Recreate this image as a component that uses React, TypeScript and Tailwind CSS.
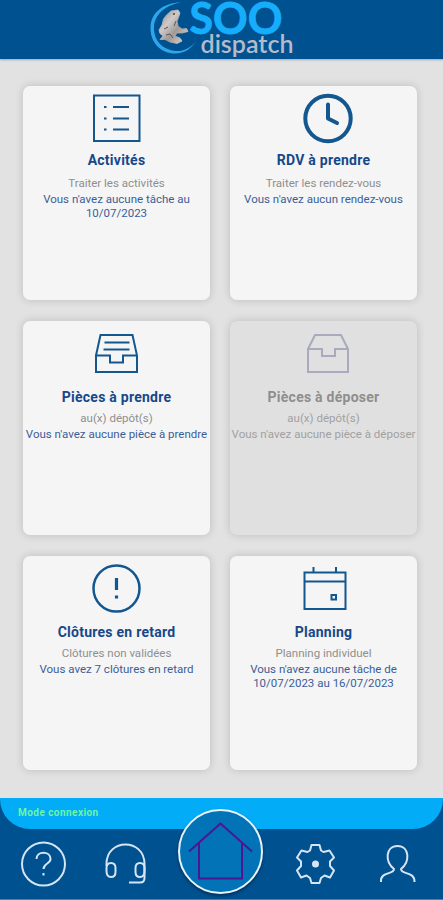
import type { ReactNode } from "react";

const font = "font-[Roboto,sans-serif]";

function Logo() {
    return (
        <svg width="150" height="62" viewBox="0 0 150 62" className="absolute top-0 left-[147px] overflow-visible">
            <defs>
                <linearGradient id="frog" x1="0" y1="0" x2="1" y2="1">
                    <stop offset="0" stopColor="#8d8785" />
                    <stop offset="0.35" stopColor="#cfcac8" />
                    <stop offset="0.6" stopColor="#a09996" />
                    <stop offset="1" stopColor="#e6e0dc" />
                </linearGradient>
            </defs>
            {/* crescent */}
            <path d="M34 2.500C16 2.500 3.500 13 3.500 28C3.500 44 15 53.500 28 53.500C38 53.500 44 48.500 49 41.500C42 49 36 51.500 29 51C16 50 7 41 7 28C7 15 18 5 34 2.500Z" fill="#2ea6ec" />
            {/* frog */}
            <path
                d="M19.500 15L24 11L31 10L33 13L31.500 17.500L30 21L31 26L35 29L39.500 28.500L41 31.500L35 33L30 33L28 36L33 38L35 41L30 43.500L23 42L18 39.500L13 39.500L16 36L13 33.500L12 30L15 25L16.500 19Z"
                fill="url(#frog)"
                stroke="url(#frog)"
                strokeWidth="0.800"
                strokeLinejoin="round"
            />
            <path d="M17 29L21 27M19 35L23 34L26 38M29 21L27 26" stroke="#5a5557" strokeWidth="1" fill="none" />
            <circle cx="27" cy="14" r="0.900" fill="#39383c" />
            <text x="42.500" y="33.500" textLength="93" lengthAdjust="spacingAndGlyphs" fontSize="43" fontWeight="700" fontFamily="Lato, sans-serif" fill="#16aefc" stroke="#16aefc" strokeWidth="0.800">SOO</text>
            <text x="53.500" y="53" textLength="93" lengthAdjust="spacingAndGlyphs" fontSize="25" fontWeight="600" fontFamily="Lato, sans-serif" fill="#b4bccb">dispatch</text>
        </svg>
    );
}

const iconProps = {
    width: 52,
    height: 52,
    viewBox: "0 0 52 52",
    fill: "none",
    stroke: "currentColor",
    strokeWidth: 2,
    className: "overflow-visible",
};

const cards: {
    title: string;
    subtitle: string;
    lines: string[];
    icon: ReactNode;
    tight?: boolean;
    disabled?: boolean;
}[] = [
    {
        title: "Activités",
        subtitle: "Traiter les activités",
        lines: ["Vous n'avez aucune tâche au", "10/07/2023"],
        tight: true,
        icon: (
            <svg {...iconProps}>
                <rect x="3" y="3.500" width="45.500" height="45.500" />
                <path d="M13 15H15.500M22 15H38M13 26.500H15.500M22 26.500H38M13 37.500H15.500M22 37.500H38" />
            </svg>
        ),
    },
    {
        title: "RDV à prendre",
        subtitle: "Traiter les rendez-vous",
        lines: ["Vous n'avez aucun rendez-vous"],
        tight: true,
        icon: (
            <svg {...iconProps} viewBox="-4 0 52 52" strokeWidth="4" strokeLinecap="round" strokeLinejoin="round">
                <circle cx="26" cy="26.500" r="22.700" />
                <path d="M26 12.500V26.500L35 31" />
            </svg>
        ),
    },
    {
        title: "Pièces à prendre",
        subtitle: "au(x) dépôt(s)",
        lines: ["Vous n'avez aucune pièce à prendre"],
        icon: (
            <svg {...iconProps}>
                <path d="M5 27.500L9.500 7H41.500L46 27.500V44H5V27.500H19V34.500H32V27.500H46M13.500 14.500H38.500M12.500 21.500H38.500" />
            </svg>
        ),
    },
    {
        title: "Pièces à déposer",
        subtitle: "au(x) dépôt(s)",
        lines: ["Vous n'avez aucune pièce à déposer"],
        disabled: true,
        icon: (
            <svg {...iconProps} viewBox="-4 0 52 52">
                <path d="M6 21L13 7H39L46 21V44H6V21H20V28H33V21H46" />
            </svg>
        ),
    },
    {
        title: "Clôtures en retard",
        subtitle: "Clôtures non validées",
        lines: ["Vous avez 7 clôtures en retard"],
        icon: (
            <svg {...iconProps} strokeWidth="2.500">
                <circle cx="25.500" cy="25.500" r="23" />
                <path d="M25.500 15V27M25.500 32.500V35.500" strokeWidth="3.200" />
            </svg>
        ),
    },
    {
        title: "Planning",
        subtitle: "Planning individuel",
        lines: ["Vous n'avez aucune tâche de", "10/07/2023 au 16/07/2023"],
        icon: (
            <svg {...iconProps} viewBox="-2 0 52 52">
                <path d="M4.500 9.500H45.500V46H4.500ZM4.500 18.500H45.500M13.500 4V9.500M36 4V9.500" />
                <rect x="31.500" y="32" width="4.500" height="4.500" />
            </svg>
        ),
    },
];

export default function App() {
    return (
        <main className={`flex h-[900px] w-[443px] flex-col overflow-hidden bg-[#e2e2e2] ${font}`}>
            {/* Header */}
            <header className="relative h-[59px] shrink-0 bg-[#00518f] shadow-[0_1px_2px_rgba(0,60,110,0.35)]">
                <Logo />
            </header>

            {/* Cards */}
            <section className="grid grow grid-cols-[187px_187px] content-start gap-x-5 gap-y-[21px] pt-[27px] pl-[23px]">
                {cards.map((card) => (
                    <div
                        key={card.title}
                        className={`flex h-[214px] flex-col items-center rounded-[7px] text-center whitespace-nowrap shadow-[0_0_8px_rgba(0,0,0,0.17)] ${
                            card.disabled ? "bg-[#e0e0e0] text-[#a9aabb]" : "bg-[#f5f5f5] text-[#125790]"
                        } ${card.tight ? "pt-[6px]" : "pt-[7px]"}`}
                    >
                        {card.icon}
                        <h2
                            className={`text-[14px] leading-[18px] font-bold tracking-[0.25px] ${card.tight ? "mt-[7px]" : "mt-[8px]"} ${
                                card.disabled ? "text-[#8e8e8e]" : "text-[#16488a]"
                            }`}
                        >
                            {card.title}
                        </h2>
                        <p
                            className={`text-[11.500px] leading-[14px] ${card.tight ? "mt-[7px]" : "mt-[5px]"} ${
                                card.disabled ? "text-[#a0a0a0]" : "text-[#8f8f8f]"
                            }`}
                        >
                            {card.subtitle}
                        </p>
                        <div
                            className={`mt-[2px] text-[11.500px] leading-[14px] ${
                                card.disabled ? "text-[#a0a0a0]" : "text-[#3b5e98]"
                            }`}
                        >
                            {card.lines.map((line) => (
                                <p key={line}>{line}</p>
                            ))}
                        </div>
                    </div>
                ))}
            </section>

            {/* Bottom bar */}
            <footer className="relative h-[102px] shrink-0 bg-[#00518f]">
                <div className="h-[31px] rounded-b-[30px] bg-[#02acf7] pt-[8px] pl-[18px]">
                    <p className="text-[10px] leading-[14px] font-bold tracking-[0.45px] text-[#6df5a5]">Mode connexion</p>
                </div>
                <nav className="flex h-[70px] text-[#d5e5f5]">
                    <svg width="88" height="70" viewBox="0 0 88 70" fill="none" stroke="currentColor" strokeWidth="2">
                        <circle cx="43.500" cy="35" r="21.500" />
                        <path d="M36.500 30C36.500 21.500 50.500 21.500 50.500 30C50.500 35 43.500 34 43.500 40M43.500 44V46.500" />
                    </svg>
                    <svg width="90" height="70" viewBox="88 0 90 70" fill="none" stroke="currentColor" strokeWidth="2">
                        <path d="M106.500 37V35C106.500 9 144.500 9 144.500 35V49Q144.500 53.500 140 53.500H129" />
                        <path d="M106.500 42V39Q106.500 34 111 34Q115.500 34 115.500 39V43Q115.500 48 111 48Q106.500 48 106.500 42ZM144.500 42V39Q144.500 34 140 34Q135.500 34 135.500 39V43Q135.500 48 140 48Q144.500 48 144.500 42Z" />
                    </svg>
                    <div className="w-[84px]" />
                    <svg width="90" height="70" viewBox="262 0 90 70" fill="none" stroke="currentColor" strokeWidth="2">
                        <path
                            d="M311.500 16H319.500L321 21.500L323.500 23L329.500 21.500L334 28.500L330 32.500V37L334 41.500L330 48.500L324.500 46.500L321 49L319.500 54H311.500L310 49L306.500 46.500L301 48.500L297 41.500L301 37V32.500L297 28.500L301.500 21.500L307.500 23L310 21.500Z"
                            strokeLinejoin="round"
                        />
                        <circle cx="315.500" cy="35" r="2.500" fill="currentColor" />
                    </svg>
                    <svg width="91" height="70" viewBox="352 0 91 70" fill="none" stroke="currentColor" strokeWidth="2">
                        <path d="M381 53C380 42 394 46 394 40C385 33 385 17 397.500 17C410 17 410 33 401 40C401 46 415 42 414.500 53" />
                    </svg>
                </nav>
                <div className="absolute bottom-0 left-0 h-px w-full bg-[#4c7eaa]" />
                <button className="absolute top-[11px] left-[178px] size-[85px] rounded-full border-2 border-[#e8f3fb] bg-[#0273b7] shadow-[0_2px_3px_rgba(0,20,50,0.5)]">
                    <svg width="81" height="81" viewBox="0 0 81 81" fill="none" stroke="#4b1596" strokeWidth="2">
                        <path d="M9 40.500L40.500 12.500L72 40.500M19 32.500V67.500H62V32.500" />
                    </svg>
                </button>
            </footer>
        </main>
    );
}
